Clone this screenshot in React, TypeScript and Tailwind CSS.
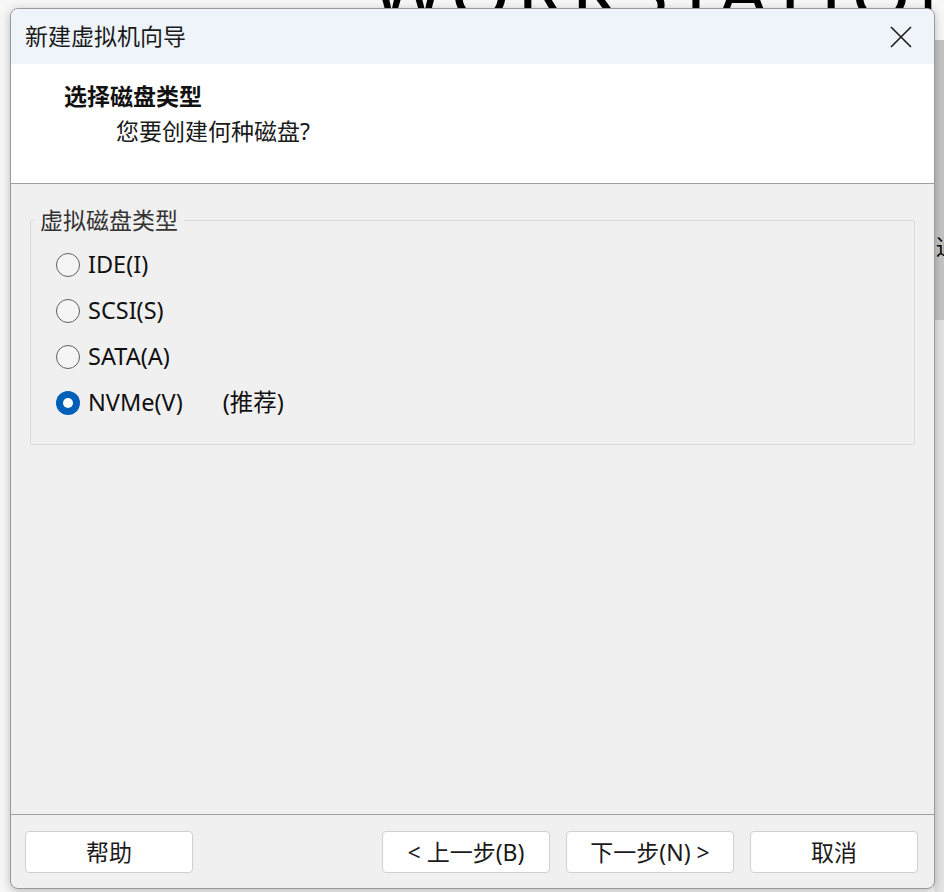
import { useState } from "react";

const font = { fontFamily: '"Noto Sans", "Noto Sans CJK SC", sans-serif' };

const options = [
  { id: "ide", label: "IDE(I)" },
  { id: "scsi", label: "SCSI(S)" },
  { id: "sata", label: "SATA(A)" },
  { id: "nvme", label: "NVMe(V)", note: "(推荐)" },
];

function Radio({ checked }: { checked: boolean }) {
  if (checked) {
    return (
      <span className="flex h-[24px] w-[24px] items-center justify-center rounded-full bg-[#005fb8]">
        <span className="h-[10px] w-[10px] rounded-full bg-white" />
      </span>
    );
  }
  return <span className="h-[24px] w-[24px] rounded-full border-[1.5px] border-[#5f5f5f] bg-[#f5f5f5]" />;
}

export default function App() {
  const [value, setValue] = useState("nvme");
  const btn = "h-[42px] w-[168px] rounded-[4px] border border-[#d1d1d1] bg-white text-[23px] text-[#1a1a1a]";

  return (
    <div className="relative h-[892px] w-[944px] overflow-hidden bg-[#f7f7f7]" style={font}>
      {/* window behind the dialog */}
      <div className="absolute left-[372px] top-[-68px] whitespace-nowrap text-[78px] tracking-[6px] text-black">WORKSTATION PRO</div>
      <div className="absolute right-0 top-[40px] h-[280px] w-[10px] bg-[#c4c4c4]" />
      <div className="absolute right-0 top-[320px] h-[572px] w-[10px] bg-[#e4e4e4]" />
      <div className="absolute left-[936px] top-[230px] text-[22px] text-black">通</div>

      <div className="relative ml-[10px] mt-[8px] flex h-[881px] w-[925px] flex-col overflow-hidden rounded-[8px] border border-[#9a9a9a] bg-[#f0f0f0] shadow-[0_2px_10px_rgba(0,0,0,0.25)]">
        <div className="flex h-[55px] items-center justify-between bg-[#eef4f9] pl-[14px] pr-[22px]">
          <span className="text-[23px] text-[#1a1a1a]">新建虚拟机向导</span>
          <svg width="22" height="22" viewBox="0 0 22 22" fill="none" stroke="#1a1a1a" strokeWidth="1.6">
            <path d="M1 1 L21 21 M21 1 L1 21" />
          </svg>
        </div>

        <div className="flex h-[120px] flex-col border-b border-[#a0a0a0] bg-white pt-[17px]">
          <div className="pl-[53px] text-[23px] font-bold leading-[30px] text-[#111]">选择磁盘类型</div>
          <div className="mt-[5px] pl-[105px] text-[23px] leading-[30px] text-[#1a1a1a]">您要创建何种磁盘?</div>
        </div>

        <div className="flex flex-1 flex-col px-[19px]">
          <fieldset className="mt-[21px] rounded-[2px] border border-[#dadada] px-0 pb-[18px] pt-[7px]">
            <legend className="ml-[3px] px-[6px] text-[23px] leading-[30px] text-[#333]">虚拟磁盘类型</legend>
            <div className="flex flex-col pl-[25px]">
              {options.map((o) => (
                <label key={o.id} className="flex h-[46px] cursor-pointer items-center" onClick={() => setValue(o.id)}>
                  <Radio checked={value === o.id} />
                  <span className="ml-[8px] text-[23.5px] text-[#111]">{o.label}</span>
                  {o.note ? <span className="ml-[40px] text-[23.5px] text-[#111]">{o.note}</span> : null}
                </label>
              ))}
            </div>
          </fieldset>
        </div>

        <div className="flex h-[74px] items-start border-t border-[#a0a0a0] px-[14px] pt-[16px]">
          <button className={btn}>帮助</button>
          <div className="ml-auto flex gap-[16px] pr-[2px]">
            <button className={btn}>&lt; 上一步(B)</button>
            <button className={`${btn} border-[#005fb8]`}>下一步(N) &gt;</button>
            <button className={btn}>取消</button>
          </div>
        </div>
      </div>
    </div>
  );
}
